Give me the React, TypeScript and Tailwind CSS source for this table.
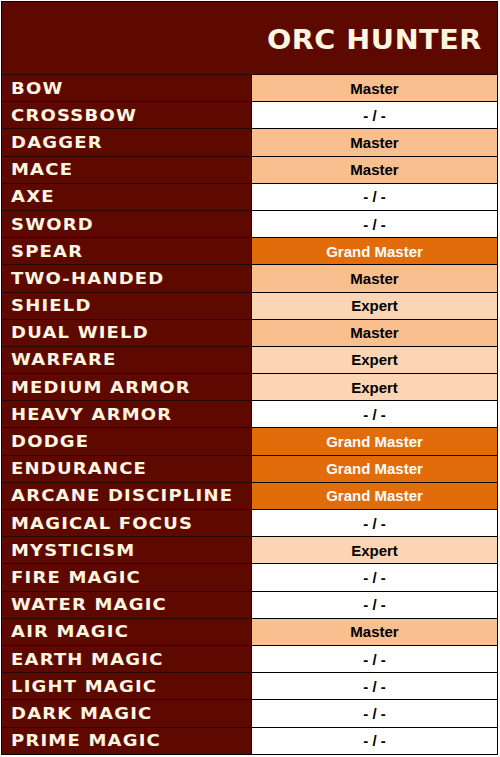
import React from 'react';

type Level = 'M' | 'E' | 'G' | '-';

const SKILLS: [string, Level][] = [
  ['BOW', 'M'],
  ['CROSSBOW', '-'],
  ['DAGGER', 'M'],
  ['MACE', 'M'],
  ['AXE', '-'],
  ['SWORD', '-'],
  ['SPEAR', 'G'],
  ['TWO-HANDED', 'M'],
  ['SHIELD', 'E'],
  ['DUAL WIELD', 'M'],
  ['WARFARE', 'E'],
  ['MEDIUM ARMOR', 'E'],
  ['HEAVY ARMOR', '-'],
  ['DODGE', 'G'],
  ['ENDURANCE', 'G'],
  ['ARCANE DISCIPLINE', 'G'],
  ['MAGICAL FOCUS', '-'],
  ['MYSTICISM', 'E'],
  ['FIRE MAGIC', '-'],
  ['WATER MAGIC', '-'],
  ['AIR MAGIC', 'M'],
  ['EARTH MAGIC', '-'],
  ['LIGHT MAGIC', '-'],
  ['DARK MAGIC', '-'],
  ['PRIME MAGIC', '-'],
];

const LEVEL_CELL: Record<Level, { label: string; cls: string }> = {
  M: { label: 'Master', cls: 'bg-[#fabf8f] text-black' },
  E: { label: 'Expert', cls: 'bg-[#fcd5b4] text-black' },
  G: { label: 'Grand Master', cls: 'bg-[#e26b0a] text-white' },
  '-': { label: '- / -', cls: 'bg-white text-black' },
};

export default function App() {
  return (
    <div className="w-[500px] h-[757px] bg-white pt-[1px] pl-[1px]">
      <div className="w-[497px] border border-black flex flex-col">
        {/* header */}
        <div className="h-[72px] bg-[#5e0900] flex">
          <div className="w-[249px]" />
          <div className="flex-1 flex items-center justify-center pt-[3px]">
            <span className="inline-block scale-x-[1.06] font-['DejaVu_Sans',sans-serif] font-bold text-[27px] tracking-[0.5px] text-[#fff6e0] leading-none">
              ORC HUNTER
            </span>
          </div>
        </div>

        {SKILLS.map(([name, lvl], i) => {
          const c = LEVEL_CELL[lvl];
          return (
            <div key={name} className="h-[27.2px] flex border-t border-[#2a0400]">
              <div className="w-[249px] bg-[#5e0900] flex items-center pl-[9px] pt-[2px]">
                <span className="inline-block origin-left scale-x-[1.2] font-['DejaVu_Sans',sans-serif] font-bold text-[15px] tracking-[1px] text-[#fff6e0] leading-none whitespace-nowrap">
                  {name}
                </span>
              </div>
              <div
                className={`flex-1 flex items-center justify-center border-l border-black ${i === 0 ? '' : 'border-t border-t-black -mt-px'} ${c.cls}`}
              >
                <span className="font-['Liberation_Sans',Arial,sans-serif] font-bold text-[15px] leading-none">
                  {c.label}
                </span>
              </div>
            </div>
          );
        })}
      </div>
    </div>
  );
}
